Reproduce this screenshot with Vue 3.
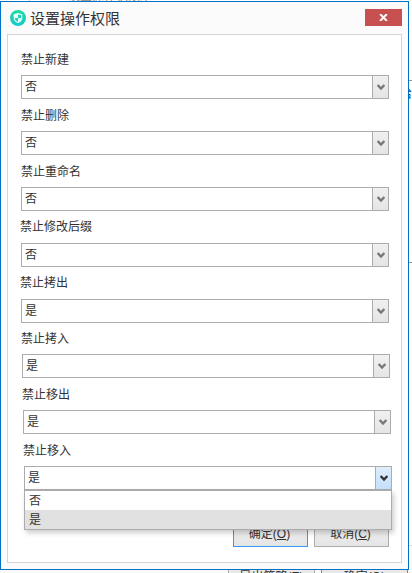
<template>
  <div class="screen">
    <div class="behind-top"><span class="behind-caption">设置操作权限策略管理</span></div>
    <div class="behind-side">
      <div class="side-box">给</div>
    </div>
    <div class="behind-foot">
      <div class="foot-btn">导出策略(E)</div>
      <div class="foot-btn primary">确定(O)</div>
    </div>

    <div class="dialog">
      <header class="title-bar">
        <svg class="logo" width="16" height="16" viewBox="0 0 16 16">
          <defs>
            <linearGradient id="logo-fill" x1="0" y1="0" x2="0" y2="1">
              <stop offset="0" stop-color="#22d89c" />
              <stop offset="1" stop-color="#12cbd0" />
            </linearGradient>
          </defs>
          <circle cx="8" cy="8" r="8" fill="url(#logo-fill)" />
          <path d="M8 3 L12.3 4.3 V8 C12.3 10.6 10.4 12.2 8 13.2 C5.6 12.2 3.7 10.6 3.7 8 V4.3 Z" fill="#e9fffa" />
          <path d="M8 8 V4.4 L11.1 5.3 V8 Z M8 8 H4.9 C4.9 10 6.2 11.1 8 11.9 Z" fill="#1bd2b6" />
        </svg>
        <h1 class="title">设置操作权限</h1>
        <button class="close" aria-label="关闭">
          <svg width="9" height="7" viewBox="0 0 9 7">
            <path d="M1.1 0 L7.9 7 M7.9 0 L1.1 7" stroke="#fff" stroke-width="2" />
          </svg>
        </button>
      </header>

      <main class="panel">
        <div v-for="(field, i) in fields" :key="field.label" class="field" :class="'field-' + (i + 1)">
          <div class="label">{{ field.label }}</div>
          <div class="select" :class="{ open: openIndex === i }" @click="toggle(i)">
            <span class="value">{{ field.value }}</span>
            <span class="arrow">
              <svg width="8" height="7" viewBox="0 0 8 7">
                <path d="M0.6 1 L4 4.6 L7.4 1" fill="none" stroke="currentColor" stroke-width="2.4" />
              </svg>
            </span>
            <ul v-if="openIndex === i" class="menu">
              <li
                v-for="option in options"
                :key="option"
                :class="{ active: option === field.value }"
                @click.stop="choose(field, option)"
              >{{ option }}</li>
            </ul>
          </div>
        </div>

        <footer class="actions">
          <button class="btn primary">确定(<u>O</u>)</button>
          <button class="btn">取消(<u>C</u>)</button>
        </footer>
      </main>
    </div>
  </div>
</template>

<script setup>
import { ref } from 'vue'

const options = ['否', '是']

const fields = ref([
  { label: '禁止新建', value: '否' },
  { label: '禁止删除', value: '否' },
  { label: '禁止重命名', value: '否' },
  { label: '禁止修改后缀', value: '否' },
  { label: '禁止拷出', value: '是' },
  { label: '禁止拷入', value: '是' },
  { label: '禁止移出', value: '是' },
  { label: '禁止移入', value: '是' }
])

const openIndex = ref(7)

function toggle(i) {
  openIndex.value = openIndex.value === i ? -1 : i
}

function choose(field, option) {
  field.value = option
  openIndex.value = -1
}
</script>

<style>
body {
  margin: 0;
  overflow: hidden;
}
</style>

<style scoped>
* {
  box-sizing: border-box;
}
.screen {
  position: relative;
  width: 412px;
  height: 573px;
  padding-top: 1px;
  overflow: hidden;
  background: #fff;
  color: #333;
  font: 12px/16px "Liberation Sans", "Noto Sans CJK SC", sans-serif;
}

/* window behind the dialog */
.behind-top {
  position: absolute;
  top: 0;
  left: 29px;
  width: 120px;
  height: 1px;
  border-left: 1px solid #ccc;
  overflow: hidden;
}
.behind-caption {
  position: absolute;
  left: 38px;
  top: -12px;
  font-size: 12px;
  white-space: nowrap;
  color: #888;
}
.behind-side {
  position: absolute;
  left: 409px;
  top: 0;
  width: 3px;
  height: 546px;
  overflow: hidden;
  border-bottom: 1px solid #ddd;
}
.side-box {
  margin-top: 80px;
  height: 183px;
  padding-top: 5px;
  border-top: 1px solid #999;
  border-bottom: 1px solid #999;
  text-indent: -9px;
  color: #036;
}
.behind-foot {
  position: absolute;
  left: 0;
  top: 546px;
  display: flex;
  gap: 6px;
  width: 412px;
  height: 40px;
  padding: 15px 0 0 228px;
  background: #f9f9f9;
}
.foot-btn {
  width: 87px;
  height: 26px;
  padding-top: 7px;
  border: 1px solid #acacac;
  background: #e9e9e9;
  text-align: center;
}
.foot-btn.primary {
  border-color: #3399ff;
}

.dialog {
  position: relative;
  display: flex;
  flex-direction: column;
  width: 409px;
  height: 569px;
  padding: 0 6px 6px;
  border: 1px solid #0072c6;
  background: #fbfbfb;
}
.title-bar {
  display: flex;
  align-items: flex-start;
  height: 32px;
}
.logo {
  margin: 8px 0 0 3px;
}
.title {
  flex: 1;
  margin: 6px 0 0 4px;
  font-size: 15px;
  font-weight: 400;
  line-height: 22px;
}
.close {
  display: flex;
  align-items: center;
  justify-content: center;
  width: 37px;
  height: 17px;
  margin: 7px 0 0;
  padding: 0;
  border: 0;
  background: #c75050;
}
.panel {
  flex: 1;
  min-height: 0;
  padding: 16px 0 0 13px;
  border: 1px solid #d5d5d5;
  background: #fff;
}
.field {
  width: 368px;
  height: 56px;
}
.field-5 {
  height: 55px;
}
.field-6 {
  margin-left: 1px;
}
.field-7 {
  margin-left: 2px;
}
.field-8 {
  margin-left: 3px;
}
.label {
  height: 24px;
  line-height: 19px;
}
.field-4 .label,
.field-5 .label {
  line-height: 17px;
}
.field-4 .label,
.field-5 .label,
.field-6 .label,
.field-7 .label,
.field-8 .label {
  text-indent: -1px;
}
.select {
  position: relative;
  display: flex;
  height: 24px;
  border: 1px solid #acacac;
  background: #fff;
}
.value {
  flex: 1;
  padding-left: 3px;
  line-height: 22px;
}
.arrow {
  display: flex;
  align-items: center;
  justify-content: center;
  width: 16px;
  border-left: 1px solid #acacac;
  background: linear-gradient(#f0f0f0, #e5e5e5);
  color: #777;
}
.open .arrow {
  background: linear-gradient(#deeefc, #c4e0fc);
  color: #333;
}
.menu {
  position: absolute;
  left: -1px;
  top: 23px;
  z-index: 1;
  width: 368px;
  margin: 0;
  padding: 0;
  border: 1px solid #acacac;
  background: #fff;
  box-shadow: 2px 3px 5px rgba(0, 0, 0, 0.2);
  list-style: none;
}
.menu li {
  height: 19px;
  padding-left: 4px;
  line-height: 21px;
}
.menu li.active {
  background: #e1e1e1;
}
.actions {
  display: flex;
  gap: 6px;
  margin: 25px 0 0 212px;
}
.btn {
  width: 75px;
  height: 24px;
  padding: 0 2px 2px 0;
  border: 1px solid #acacac;
  background: linear-gradient(#f0f0f0, #e5e5e5);
  color: #333;
  font: inherit;
}
.btn.primary {
  border-color: #3399ff;
}
</style>
